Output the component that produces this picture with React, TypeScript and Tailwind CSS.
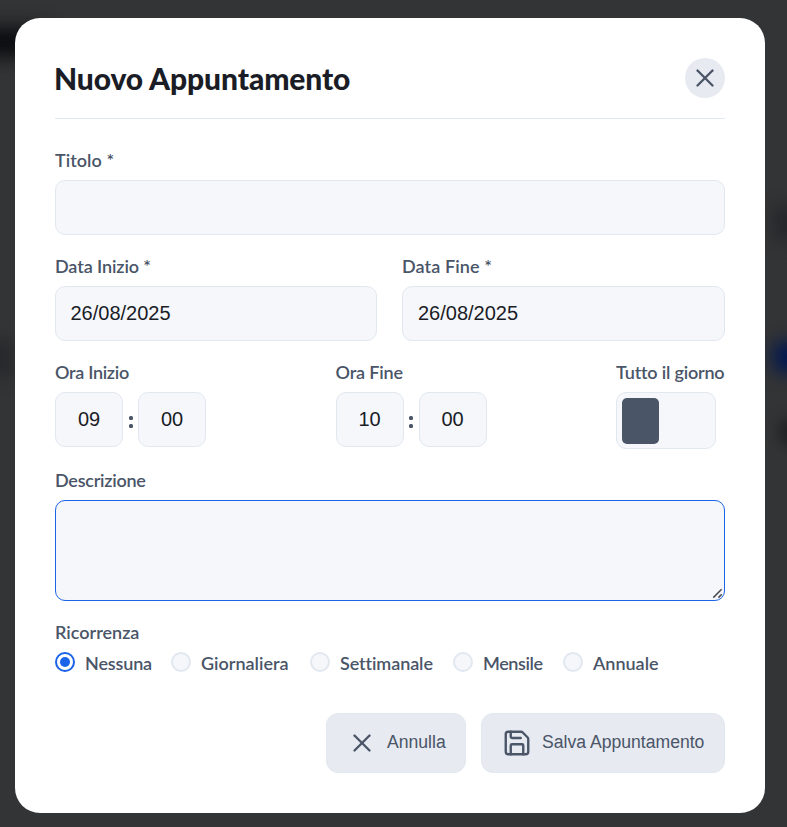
import React from "react";
import { Save, X } from "lucide-react";

const label = "block h-[21px] whitespace-nowrap pt-px text-[18px] leading-[21px] font-semibold text-[#4a5568]";
const input =
  "block h-[55px] rounded-[10px] border border-[#e2e8f0] bg-[#f5f7fb] font-['Liberation_Sans',Arial,sans-serif] text-[20px] text-[#1a1c26] outline-none";

function Label({ text, spacing }: { text: string; spacing: string }) {
  return (
    <span className={label}>
      <span className={spacing}>{text}</span>
    </span>
  );
}

function Time({ title, spacing, hour }: { title: string; spacing: string; hour: string }) {
  return (
    <div className="flex w-[151px] flex-col gap-2.5">
      <Label text={title} spacing={spacing} />
      <div className="flex items-center">
        <input className={`${input} w-[68px] text-center`} defaultValue={hour} />
        <span className="flex w-[15px] shrink-0 flex-col items-center gap-1 pt-1">
          <span className="size-1 rounded-[1.5px] bg-[#4a5568]" />
          <span className="size-1 rounded-[1.5px] bg-[#4a5568]" />
        </span>
        <input className={`${input} w-[68px] text-center`} defaultValue="00" />
      </div>
    </div>
  );
}

const options = [
  { text: "Nessuna", spacing: "tracking-[-0.15px]", width: "w-[96px]" },
  { text: "Giornaliera", spacing: "tracking-[0px]", width: "w-[119px]" },
  { text: "Settimanale", spacing: "tracking-[-0.1px] [font-variant-ligatures:common-ligatures]", width: "w-[123px]" },
  { text: "Mensile", spacing: "tracking-[-0.4px]", width: "w-[90px]" },
  { text: "Annuale", spacing: "tracking-[0px]", width: "w-[97px]" },
];

const button =
  "flex h-[60px] items-center gap-2.5 whitespace-nowrap rounded-[12px] border border-[#e2e8f0] bg-[#e7eaf0] pl-5 font-['Liberation_Sans',Arial,sans-serif] text-[17.6px] text-[#4a5568]";

export default function App() {
  return (
    <div className="relative h-[827px] w-[787px] overflow-hidden bg-[#333435] pt-[18px] pl-[15px] font-['Lato',sans-serif]">
      <div className="absolute top-[28px] -left-6 h-[28px] w-[70px] bg-[#08090c] blur-[10px]" />
      <div className="absolute top-[342px] left-[774px] h-[30px] w-[60px] bg-[#001650] blur-[9px]" />
      <div className="absolute top-[205px] left-[772px] h-[36px] w-[40px] bg-[#27282b] blur-[8px]" />
      <div className="absolute top-[420px] left-[780px] h-[25px] w-[30px] bg-[#1f2021] blur-[7px]" />
      <div className="absolute top-[340px] -left-5 h-[38px] w-[35px] bg-[#28292c] blur-[8px]" />
      <div className="relative h-[795px] w-[750px] rounded-[25px] bg-white px-10 pt-10">
        <header className="flex h-[61px] items-start justify-between border-b border-[#e2e8f0]">
          <h1 className="-ml-px whitespace-nowrap text-[30px] leading-[40px] font-black tracking-[-0.1px] text-[#1a1c26]">Nuovo Appuntamento</h1>
          <button className="flex size-10 items-center justify-center rounded-full bg-[#e7eaf0] text-[#4a5568]">
            <X size={30} strokeWidth={1.9} />
          </button>
        </header>
        <form className="flex flex-col gap-5 pt-[30px]">
          <div className="flex flex-col gap-2.5">
            <Label text="Titolo *" spacing="tracking-[0.05px]" />
            <input className={`${input} w-full px-[15px]`} />
          </div>
          <div className="grid grid-cols-[322px_323px] gap-[25px]">
            <div className="flex flex-col gap-2.5">
              <Label text="Data Inizio *" spacing="tracking-[-0.1px]" />
              <input className={`${input} w-full px-[14.5px]`} defaultValue="26/08/2025" />
            </div>
            <div className="flex flex-col gap-2.5">
              <Label text="Data Fine *" spacing="tracking-[0.1px]" />
              <input className={`${input} w-full px-[15px]`} defaultValue="26/08/2025" />
            </div>
          </div>
          <div className="flex h-[88px] items-start justify-between">
            <Time title="Ora Inizio" spacing="tracking-[-0.3px]" hour="09" />
            <Time title="Ora Fine" spacing="tracking-[-0.15px]" hour="10" />
            <div className="flex w-[109px] flex-col gap-2.5">
              <Label text="Tutto il giorno" spacing="tracking-[-0.2px]" />
              <div className="h-[57px] w-[100px] rounded-[10px] border border-[#e2e8f0] bg-[#f5f7fb] p-[5px]">
                <div className="h-[46px] w-[37px] rounded-[5px] bg-[#4a5568]" />
              </div>
            </div>
          </div>
          <div className="flex flex-col gap-2.5">
            <Label text="Descrizione" spacing="tracking-[-0.25px]" />
            <div className="relative">
              <textarea className="block h-[101px] w-full resize-none rounded-[10px] border border-[#1b63e8] bg-[#f5f7fb] outline-none" />
              <svg className="absolute right-0.5 bottom-0.5" width="12" height="12" viewBox="0 0 12 12" fill="none" stroke="#4b4b4f" strokeWidth="1.5">
                <path d="M2.3 10.6 10.6 2.3M7.4 10.6l3.4-3.4" />
              </svg>
            </div>
          </div>
          <div className="flex flex-col gap-2.5">
            <Label text="Ricorrenza" spacing="tracking-[0px]" />
            <div className="flex h-5 gap-5">
              {options.map((o, i) => (
                <label key={o.text} className={`flex shrink-0 items-center gap-2.5 ${o.width}`}>
                  <span
                    className={`flex size-5 shrink-0 items-center justify-center rounded-full border-2 ${
                      i === 0 ? "border-[#1b63e8] bg-white" : "border-[#e2e8f0] bg-[#f5f7fb]"
                    }`}
                  >
                    {i === 0 && <span className="size-2.5 rounded-full bg-[#1b63e8]" />}
                  </span>
                  <Label text={o.text} spacing={o.spacing} />
                </label>
              ))}
            </div>
          </div>
        </form>
        <footer className="flex justify-end gap-[15px] pt-[41px]">
          <button className={`${button} w-[140px]`}>
            <X size={30} strokeWidth={1.9} />
            <span className="-mt-0.5">Annulla</span>
          </button>
          <button className={`${button} w-[244px]`}>
            <Save size={30} strokeWidth={1.9} />
            <span className="-mt-0.5">Salva Appuntamento</span>
          </button>
        </footer>
      </div>
    </div>
  );
}
